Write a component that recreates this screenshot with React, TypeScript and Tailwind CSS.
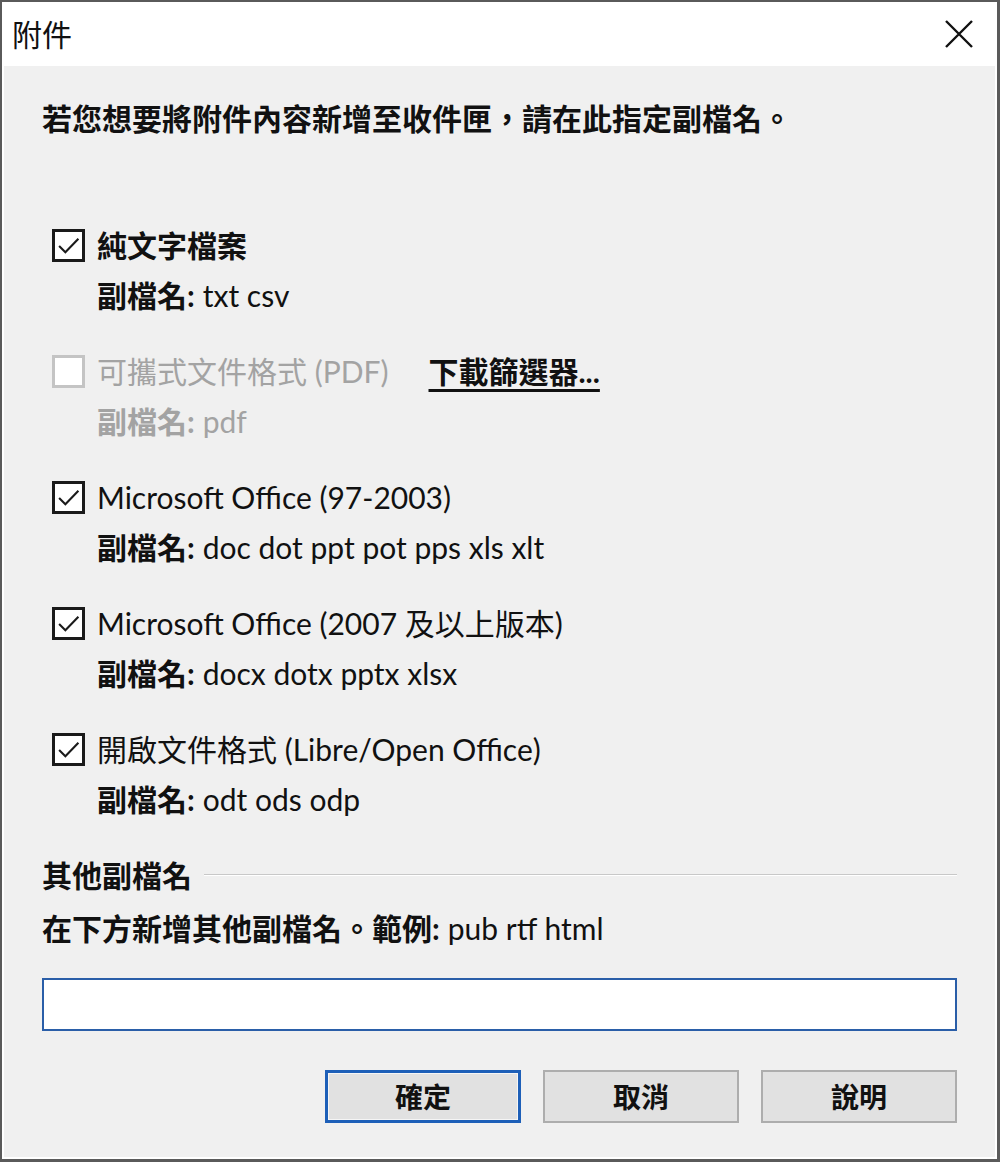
import React from 'react'

const font = { fontFamily: 'Lato, "Noto Sans CJK TC", sans-serif' }

const CheckBox = ({ checked, disabled }: { checked?: boolean; disabled?: boolean }) => (
  <div
    className={
      'w-[33px] h-[33px] bg-white border-[3px] flex items-center justify-center ' +
      (disabled ? 'border-[#c4c4c4]' : 'border-[#1a1a1a]')
    }
  >
    {checked && (
      <svg width="25" height="25" viewBox="0 0 24 24" fill="none">
        <path d="M3 12.5 L9 18.5 L21.5 5.5" stroke="#1a1a1a" strokeWidth="2" />
      </svg>
    )}
  </div>
)

const Option = ({
  label,
  exts,
  checked,
  disabled,
  extra,
}: {
  label: React.ReactNode
  exts: string
  checked?: boolean
  disabled?: boolean
  extra?: React.ReactNode
}) => (
  <div className={'flex ' + (disabled ? 'text-[#a3a3a3]' : 'text-[#111]')}>
    <div className="w-[55px] h-[50px] flex items-center pl-[10px]">
      <CheckBox checked={checked} disabled={disabled} />
    </div>
    <div className="flex flex-col">
      <div className="h-[50px] flex items-center">
        <span>{label}</span>
        {extra}
      </div>
      <div className="h-[50px] flex items-center">
        <span className="font-bold">副檔名:</span>
        <span className="ml-[8px]">{exts}</span>
      </div>
    </div>
  </div>
)

const Btn = ({ label, primary }: { label: string; primary?: boolean }) => (
  <button
    className={
      'w-[196px] h-[53px] bg-[#e1e1e1] font-bold text-[28px] text-[#111] flex items-center justify-center ' +
      (primary ? 'border-[3px] border-[#1d5fb8] shadow-[inset_0_0_0_1px_#f5f5f5]' : 'border-2 border-[#adadad]')
    }
  >
    {label}
  </button>
)

export default function App() {
  return (
    <div style={font} className="w-[1000px] h-[1162px] bg-white border-[#5a5a5a] border-t-2 border-l-2 border-r-[3px] border-b-[3px] flex flex-col text-[30px]">
      <div className="h-[64px] flex items-center justify-between pl-[10px] pr-[22px] shrink-0">
        <span className="text-[30px] text-[#111]">附件</span>
        <svg width="32" height="32" viewBox="0 0 32 32">
          <path d="M3 3 L29 29 M29 3 L3 29" stroke="#111" strokeWidth="2.4" />
        </svg>
      </div>
      <div className="flex-1 bg-[#f0f0f0] ml-[2px] mr-[2px] mb-[2px] pl-[38px] pr-[38px] pt-[27px] flex flex-col">
        <div className="h-[50px] flex items-center font-bold text-[#111]">
          若您想要將附件內容新增至收件匣，請在此指定副檔名。
        </div>
        <div className="mt-[77px] flex flex-col gap-[26px]">
          <Option checked label={<span className="font-bold">純文字檔案</span>} exts="txt csv" />
          <Option
            disabled
            label="可攜式文件格式 (PDF)"
            exts="pdf"
            extra={<span className="ml-[40px] font-bold text-[#111] underline underline-offset-[6px]">下載篩選器...</span>}
          />
          <Option checked label="Microsoft Office (97-2003)" exts="doc dot ppt pot pps xls xlt" />
          <Option checked label="Microsoft Office (2007 及以上版本)" exts="docx dotx pptx xlsx" />
          <Option checked label="開啟文件格式 (Libre/Open Office)" exts="odt ods odp" />
        </div>
        <div className="mt-[26px] h-[50px] flex items-center gap-[12px]">
          <span className="font-bold text-[#111]">其他副檔名</span>
          <div className="flex-1 h-[2px] bg-[#c8c8c8] border-b border-white" />
        </div>
        <div className="mt-[3px] h-[50px] flex items-center text-[#111]">
          <span className="font-bold">在下方新增其他副檔名。範例:</span>
          <span className="ml-[8px]">pub rtf html</span>
        </div>
        <div className="mt-[25px] h-[53px] bg-white border-2 border-[#2a5ea8]" />
        <div className="mt-[39px] flex justify-end gap-[22px]">
          <Btn primary label="確定" />
          <Btn label="取消" />
          <Btn label="說明" />
        </div>
      </div>
    </div>
  )
}
